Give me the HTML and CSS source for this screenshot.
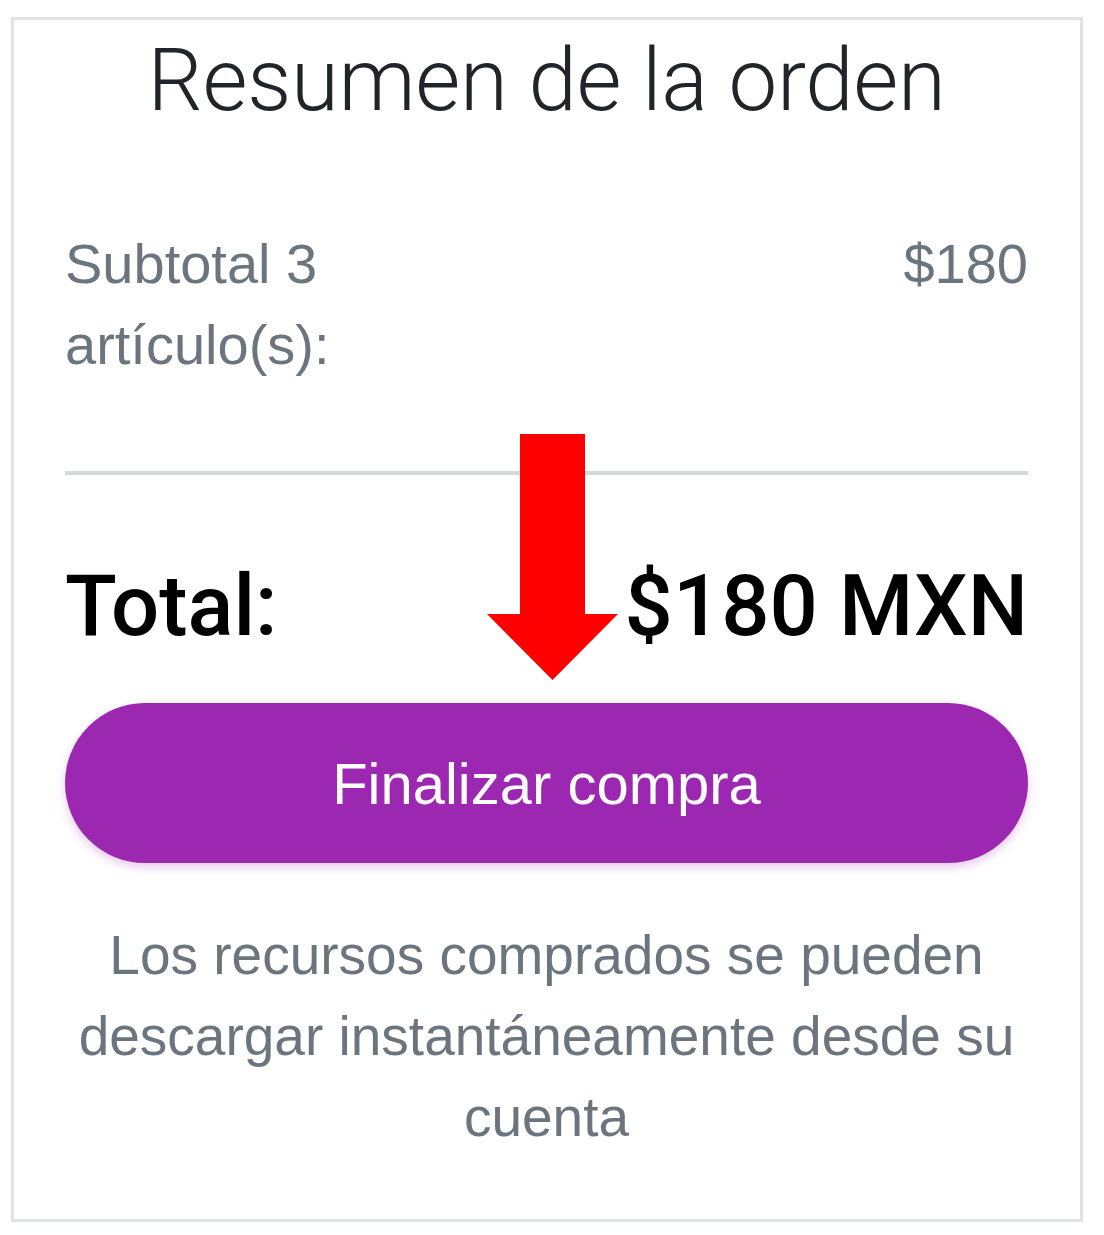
FILE: index.html
```html
<!DOCTYPE html>
<html lang="es">
<head>
<meta charset="utf-8">
<title>Resumen de la orden</title>
<link rel="stylesheet" href="styles.css">
</head>
<body>
<div class="card">
  <h1 class="title">Resumen de la orden</h1>
  <div class="subtotal">
    <span class="sub-label">Subtotal 3<br>artículo(s):</span>
    <span class="sub-value">$180</span>
  </div>
  <hr class="divider">
  <div class="total">
    <span class="total-label">Total:</span>
    <span class="total-value">$180 MXN</span>
  </div>
  <button class="checkout">Finalizar compra</button>
  <p class="note">Los recursos comprados se pueden descargar instantáneamente desde su cuenta</p>
  <svg class="arrow" width="132" height="246" viewBox="0 0 132 246" aria-hidden="true">
    <polygon points="33,0 98,0 98,180 131,180 65.5,246 0,180 33,180" fill="#ff0000"/>
  </svg>
</div>
</body>
</html>
```

FILE: styles.css
```css
html, body {
  margin: 0;
  padding: 0;
  background: #ffffff;
}

.card {
  position: relative;
  box-sizing: border-box;
  width: 1072px;
  height: 1205px;
  margin: 17px 0 0 11px;
  border: 3px solid #e0e2e7;
  padding: 0 52px 0 51px;
  font-family: "Liberation Sans", Arial, sans-serif;
}

.title {
  margin: 10px -20px 0 -20px;
  font-family: Roboto, sans-serif;
  font-weight: 300;
  font-size: 87px;
  line-height: 100px;
  text-align: center;
  color: #212529;
  letter-spacing: -0.3px;
}

.subtotal {
  display: flex;
  justify-content: space-between;
  align-items: flex-start;
  margin-top: 93px;
  color: #6c757d;
  font-size: 56px;
  line-height: 81px;
}

.divider {
  margin: 86px 0 0 0;
  border: 0;
  height: 4px;
  background: #d6d9db;
}

.total {
  display: flex;
  justify-content: space-between;
  align-items: baseline;
  margin-top: 83px;
  font-family: Roboto, sans-serif;
  font-weight: 500;
  font-size: 85px;
  line-height: 96px;
  color: #000000;
}

.checkout {
  display: block;
  width: 100%;
  height: 160px;
  margin-top: 49px;
  padding: 0;
  border: 0;
  border-radius: 80px;
  background: #9c27b0;
  color: #ffffff;
  font-family: "Liberation Sans", Arial, sans-serif;
  font-size: 58px;
  box-shadow: 0 4px 10px rgba(156, 39, 176, 0.25);
}

.note {
  margin: 52px -10px 0 -10px;
  text-align: center;
  color: #6c757d;
  font-size: 55px;
  line-height: 81px;
}

.arrow {
  position: absolute;
  left: 473px;
  top: 414px;
}
```
